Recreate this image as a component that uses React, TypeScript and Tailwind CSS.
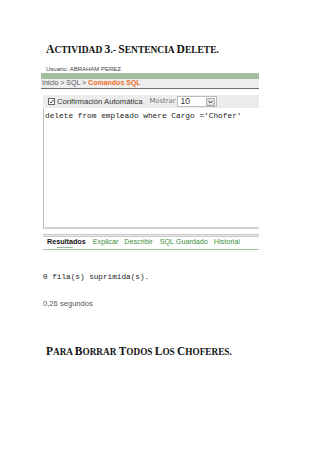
import React from "react";

function CapsTitle({ text, big, small, scale }: { text: string; big: number; small: number; scale: string }) {
  const words = text.split(" ");
  return (
    <div
      className={`inline-block origin-left whitespace-nowrap font-bold text-[#111] ${scale}`}
      style={{ fontFamily: '"Liberation Serif", "DejaVu Serif", serif' }}
    >
      {words.map((w, i) => (
        <span key={i}>
          <span style={{ fontSize: big }}>{w.charAt(0)}</span>
          <span style={{ fontSize: small }}>{w.slice(1).toUpperCase()}</span>
          {i < words.length - 1 ? <span style={{ fontSize: small }}> </span> : null}
        </span>
      ))}
    </div>
  );
}

export default function App() {
  return (
    <div className="w-[320px] h-[453px] bg-white relative overflow-hidden" style={{ fontFamily: '"Liberation Sans", Arial, sans-serif' }}>
      <div className="pt-[41px]">
        <div className="ml-[46px] h-[13px] flex items-center leading-none">
          <CapsTitle text="ACTIVIDAD 3.- SENTENCIA DELETE." big={13.5} small={11} scale="scale-x-[0.86]" />
        </div>
        <div className="mt-[12px] ml-[46px] h-[6px] flex items-center text-[6px] text-[#444]">
          Usuario: ABRAHAM PEREZ
        </div>
        <div className="mt-[1px] ml-[41px] w-[218px]">
          <div className="h-[6px] bg-[#a3bf9f]" />
          <div className="h-[10px] bg-[#eeeeee] border-b border-[#6d6d6d] flex items-center text-[7px] text-[#555] pl-[1px]">
            <span>Inicio &gt; SQL &gt; </span>
            <span className="ml-[2px] text-[#f0702a] font-bold">Comandos SQL</span>
          </div>
        </div>
        <div className="mt-[6px] ml-[43px] w-[216px]">
          <div className="h-[13px] bg-[#ececec] flex items-center pl-[5px]">
            <div className="w-[7px] h-[7px] border border-[#666] bg-white flex items-center justify-center">
              <svg width="5" height="5" viewBox="0 0 5 5"><path d="M0.6 2.6 L2 4 L4.5 0.8" stroke="#333" strokeWidth="0.9" fill="none" /></svg>
            </div>
            <span className="ml-[2px] text-[7.7px] text-[#333]">Confirmación Automática</span>
            <span className="ml-[7px] text-[#777]" style={{ fontFamily: '"DejaVu Sans", sans-serif', fontSize: "6.8px" }}>Mostrar</span>
            <div className="ml-[2px] h-[11px] w-[40px] bg-white border border-[#bbb] flex items-center">
              <span className="ml-[2px] text-[8.5px] text-[#333] flex-1">10</span>
              <div className="w-[9px] h-[8px] mr-[1px] bg-[#e4e4e4] border border-[#aaa] flex items-center justify-center">
                <svg width="5" height="4" viewBox="0 0 5 4"><path d="M0.5 0.8 L2.5 3 L4.5 0.8" stroke="#333" strokeWidth="1" fill="none" /></svg>
              </div>
            </div>
          </div>
          <div className="h-[121px] border-l border-[#bdbdbd] border-b-2 border-b-[#d2d2d2] bg-white pl-[1px] pt-[4px]">
            <div className="text-[7.8px] leading-[9px] text-[#222] whitespace-pre" style={{ fontFamily: '"Liberation Mono", "Courier New", monospace' }}>
              delete from empleado where Cargo ='Chofer'
            </div>
          </div>
          <div className="mt-[5px] h-[3px] border-y border-[#c9c9c9] bg-[#e8e8e8]" />
          <div className="h-[10px] flex items-center text-[7.2px] pl-[4px]">
            <span className="font-bold text-[#111]">Resultados</span>
            <span className="ml-[7px] text-[#3d8f3d]">Explicar</span>
            <span className="ml-[6px] text-[#3d8f3d]">Describir</span>
            <span className="ml-[7px] text-[#3d8f3d]">SQL Guardado</span>
            <span className="ml-[6px] text-[#3d8f3d]">Historial</span>
          </div>
          <div className="h-[1px] ml-[14px] w-[16px] bg-[#9fbf9b]" />
          <div className="mt-[1px] h-[1px] bg-[#a5c4a1]" />
        </div>
        <div
          className="mt-[24px] ml-[43px] h-[8px] flex items-center text-[7.7px] text-[#222] whitespace-pre"
          style={{ fontFamily: '"Liberation Mono", "Courier New", monospace' }}
        >
          0 fila(s) suprimida(s).
        </div>
        <div className="mt-[18px] ml-[43px] h-[8px] flex items-center text-[7.6px] text-[#555]">
          0,26 segundos
        </div>
        <div className="mt-[36px] ml-[46px] h-[11px] flex items-center leading-none">
          <CapsTitle text="PARA BORRAR TODOS LOS CHOFERES." big={13} small={10.5} scale="scale-x-[0.88]" />
        </div>
      </div>
    </div>
  );
}
